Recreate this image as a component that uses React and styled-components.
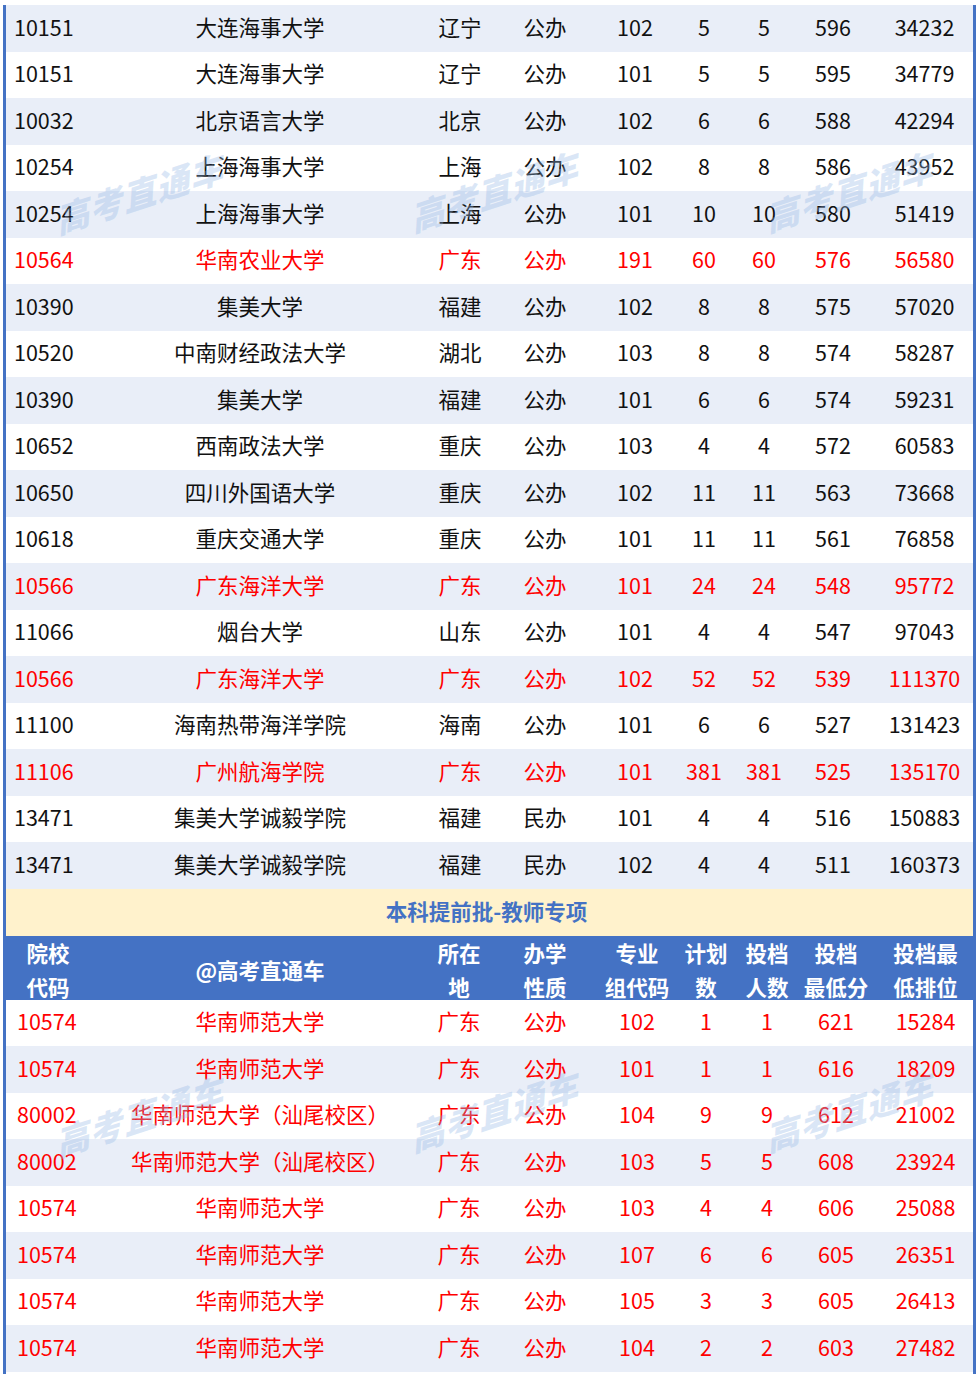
import React from "react"
import styled, { createGlobalStyle } from "styled-components"

const BLUE = "#4472c4"
const STRIPE = "#e9eef8"

const GlobalStyle = createGlobalStyle`
  html, body {
    margin: 0;
    padding: 0;
    background: #fff;
  }
  body {
    font-family: "Noto Sans CJK SC", "Noto Sans", sans-serif;
  }
`

const top = [
  ["10151", "大连海事大学", "辽宁", "公办", "102", "5", "5", "596", "34232"],
  ["10151", "大连海事大学", "辽宁", "公办", "101", "5", "5", "595", "34779"],
  ["10032", "北京语言大学", "北京", "公办", "102", "6", "6", "588", "42294"],
  ["10254", "上海海事大学", "上海", "公办", "102", "8", "8", "586", "43952"],
  ["10254", "上海海事大学", "上海", "公办", "101", "10", "10", "580", "51419"],
  ["10564", "华南农业大学", "广东", "公办", "191", "60", "60", "576", "56580", true],
  ["10390", "集美大学", "福建", "公办", "102", "8", "8", "575", "57020"],
  ["10520", "中南财经政法大学", "湖北", "公办", "103", "8", "8", "574", "58287"],
  ["10390", "集美大学", "福建", "公办", "101", "6", "6", "574", "59231"],
  ["10652", "西南政法大学", "重庆", "公办", "103", "4", "4", "572", "60583"],
  ["10650", "四川外国语大学", "重庆", "公办", "102", "11", "11", "563", "73668"],
  ["10618", "重庆交通大学", "重庆", "公办", "101", "11", "11", "561", "76858"],
  ["10566", "广东海洋大学", "广东", "公办", "101", "24", "24", "548", "95772", true],
  ["11066", "烟台大学", "山东", "公办", "101", "4", "4", "547", "97043"],
  ["10566", "广东海洋大学", "广东", "公办", "102", "52", "52", "539", "111370", true],
  ["11100", "海南热带海洋学院", "海南", "公办", "101", "6", "6", "527", "131423"],
  ["11106", "广州航海学院", "广东", "公办", "101", "381", "381", "525", "135170", true],
  ["13471", "集美大学诚毅学院", "福建", "民办", "101", "4", "4", "516", "150883"],
  ["13471", "集美大学诚毅学院", "福建", "民办", "102", "4", "4", "511", "160373"],
]

const bottom = [
  ["10574", "华南师范大学", "广东", "公办", "102", "1", "1", "621", "15284", true],
  ["10574", "华南师范大学", "广东", "公办", "101", "1", "1", "616", "18209", true],
  ["80002", "华南师范大学（汕尾校区）", "广东", "公办", "104", "9", "9", "612", "21002", true],
  ["80002", "华南师范大学（汕尾校区）", "广东", "公办", "103", "5", "5", "608", "23924", true],
  ["10574", "华南师范大学", "广东", "公办", "103", "4", "4", "606", "25088", true],
  ["10574", "华南师范大学", "广东", "公办", "107", "6", "6", "605", "26351", true],
  ["10574", "华南师范大学", "广东", "公办", "105", "3", "3", "605", "26413", true],
  ["10574", "华南师范大学", "广东", "公办", "104", "2", "2", "603", "27482", true],
]

const headers = [
  ["院校", "代码"],
  ["@高考直通车"],
  ["所在", "地"],
  ["办学", "性质"],
  ["专业", "组代码"],
  ["计划", "数"],
  ["投档", "人数"],
  ["投档", "最低分"],
  ["投档最", "低排位"],
]

const COLS_TOP = "84px 340px 60px 110px 70px 68px 52px 86px 97px"
const COLS_BOTTOM = "84px 340px 58px 114px 70px 68px 54px 84px 95px"

// watermark spots, relative to each section
const MARKS_TOP = [[50, 190], [405, 188], [760, 188]]
const MARKS_BOTTOM = [[50, 118], [405, 113], [760, 113]]

export default function App() {
  return (
    <>
      <GlobalStyle />
      <Frame>
        <Section>
          {top.map((r, i) => (
            <Row key={i} $cols={COLS_TOP} $striped={i % 2 === 0} $red={r[9]}>
              {r.slice(0, 9).map((c, j) => (
                <Cell key={j} $left={j === 0} $pad={8}>
                  {c}
                </Cell>
              ))}
            </Row>
          ))}
          {MARKS_TOP.map(([x, y], i) => (
            <Mark key={i} style={{ left: x, top: y }}>高考直通车</Mark>
          ))}
        </Section>
        <Banner>本科提前批-教师专项</Banner>
        <Head $cols={COLS_BOTTOM}>
          {headers.map((h, j) => (
            <HeadCell key={j}>
              {h.map((line, k) => (
                <span key={k}>{line}</span>
              ))}
            </HeadCell>
          ))}
        </Head>
        <Section>
          {bottom.map((r, i) => (
            <Row key={i} $cols={COLS_BOTTOM} $striped={i % 2 === 1} $red={r[9]}>
              {r.slice(0, 9).map((c, j) => (
                <Cell key={j} $left={j === 0} $pad={11}>
                  {c}
                </Cell>
              ))}
            </Row>
          ))}
          {MARKS_BOTTOM.map(([x, y], i) => (
            <Mark key={i} style={{ left: x, top: y }}>高考直通车</Mark>
          ))}
        </Section>
      </Frame>
    </>
  )
}

const Frame = styled.div`
  margin: 5px 0 0 3px;
  width: 967px;
  border-left: 3px solid ${BLUE};
  border-right: 3px solid ${BLUE};
  padding-bottom: 2px;
  overflow: hidden;
`

const Section = styled.div`
  position: relative;
`

const Row = styled.div`
  display: grid;
  grid-template-columns: ${p => p.$cols};
  box-sizing: border-box;
  height: 46.5px;
  padding-bottom: 4px;
  align-items: center;
  background: ${p => (p.$striped ? STRIPE : "#fff")};
  color: ${p => (p.$red ? "#ff0000" : "#111")};
  font-size: 21.5px;
`

const Cell = styled.div`
  text-align: ${p => (p.$left ? "left" : "center")};
  padding-left: ${p => (p.$left ? `${p.$pad}px` : 0)};
  white-space: nowrap;
  line-height: 1;
`

const Banner = styled.div`
  box-sizing: border-box;
  height: 47px;
  padding: 0 6px 4px 0;
  background: #fff2cc;
  color: ${BLUE};
  font-size: 21.5px;
  font-weight: 700;
  display: flex;
  align-items: center;
  justify-content: center;
`

const Head = styled.div`
  display: grid;
  grid-template-columns: ${p => p.$cols};
  box-sizing: border-box;
  height: 64px;
  padding-bottom: 5px;
  background: ${BLUE};
  color: #fff;
  font-size: 21.5px;
  font-weight: 700;
`

const HeadCell = styled.div`
  display: flex;
  flex-direction: column;
  justify-content: center;
  align-items: center;
  line-height: 34px;
  white-space: nowrap;
`

const Mark = styled.div`
  position: absolute;
  font-size: 34px;
  font-weight: 900;
  font-style: italic;
  color: rgba(150, 185, 230, 0.35);
  transform: rotate(-18deg) skewX(-8deg);
  transform-origin: left center;
  white-space: nowrap;
  pointer-events: none;
  letter-spacing: 1px;
`
